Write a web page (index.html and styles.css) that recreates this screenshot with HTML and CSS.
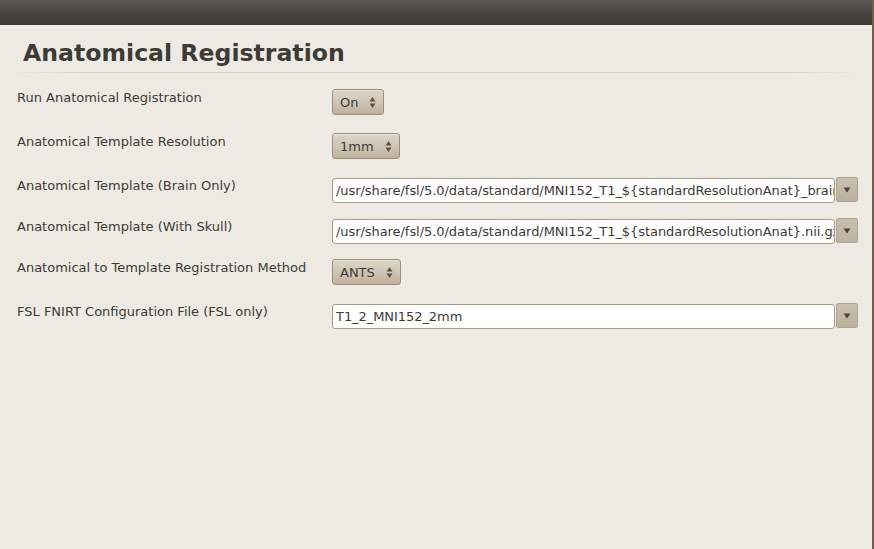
FILE: index.html
```html
<!DOCTYPE html>
<html>
<head>
<meta charset="utf-8">
<link rel="stylesheet" href="styles.css">
</head>
<body>
<div class="window">
  <div class="titlebar"></div>
  <div class="content">
    <h1 class="heading">Anatomical Registration</h1>
    <div class="rule"></div>
    <div class="form">
      <div class="row row-spin">
        <div class="label">Run Anatomical Registration</div>
        <div class="spin"><span class="spin-text">On</span><span class="arrows"><svg width="7" height="13" viewBox="0 0 7 13"><path d="M3.5 1 L6.5 5.5 L0.5 5.5 Z" fill="#5a5247"/><path d="M3.5 12 L6.5 7.5 L0.5 7.5 Z" fill="#5a5247"/></svg></span></div>
      </div>
      <div class="row row-spin">
        <div class="label">Anatomical Template Resolution</div>
        <div class="spin"><span class="spin-text">1mm</span><span class="arrows"><svg width="7" height="13" viewBox="0 0 7 13"><path d="M3.5 1 L6.5 5.5 L0.5 5.5 Z" fill="#5a5247"/><path d="M3.5 12 L6.5 7.5 L0.5 7.5 Z" fill="#5a5247"/></svg></span></div>
      </div>
      <div class="row row-input">
        <div class="label">Anatomical Template (Brain Only)</div>
        <div class="combo"><div class="entry">/usr/share/fsl/5.0/data/standard/MNI152_T1_${standardResolutionAnat}_brain.nii.gz</div><div class="drop"><svg width="8" height="6" viewBox="0 0 8 6"><path d="M0.5 0.5 L7.5 0.5 L4 5.5 Z" fill="#4a433a"/></svg></div></div>
      </div>
      <div class="row row-input">
        <div class="label">Anatomical Template (With Skull)</div>
        <div class="combo"><div class="entry">/usr/share/fsl/5.0/data/standard/MNI152_T1_${standardResolutionAnat}.nii.gz</div><div class="drop"><svg width="8" height="6" viewBox="0 0 8 6"><path d="M0.5 0.5 L7.5 0.5 L4 5.5 Z" fill="#4a433a"/></svg></div></div>
      </div>
      <div class="row row-spin">
        <div class="label">Anatomical to Template Registration Method</div>
        <div class="spin"><span class="spin-text">ANTS</span><span class="arrows"><svg width="7" height="13" viewBox="0 0 7 13"><path d="M3.5 1 L6.5 5.5 L0.5 5.5 Z" fill="#5a5247"/><path d="M3.5 12 L6.5 7.5 L0.5 7.5 Z" fill="#5a5247"/></svg></span></div>
      </div>
      <div class="row row-input">
        <div class="label">FSL FNIRT Configuration File (FSL only)</div>
        <div class="combo"><div class="entry">T1_2_MNI152_2mm</div><div class="drop"><svg width="8" height="6" viewBox="0 0 8 6"><path d="M0.5 0.5 L7.5 0.5 L4 5.5 Z" fill="#4a433a"/></svg></div></div>
      </div>
    </div>
  </div>
</div>
</body>
</html>
```
FILE: styles.css
```css
html, body {
  margin: 0;
  padding: 0;
  width: 874px;
  height: 549px;
  overflow: hidden;
  background: #edeae3;
}
.window {
  width: 872px;
  height: 549px;
  border-right: 2px solid #6f604d;
  box-sizing: content-box;
  display: flex;
  flex-direction: column;
  font-family: "DejaVu Sans", sans-serif;
  color: #3c3b37;
}
.titlebar {
  height: 25px;
  flex: none;
  background: linear-gradient(to bottom, #5a5954 0%, #46453f 50%, #3c3b37 100%);
}
.content {
  flex: 1;
  background: #edeae3;
}
.heading {
  margin: 0;
  padding: 13px 0 0 23px;
  height: 33px;
  font-family: "DejaVu Sans", sans-serif;
  font-weight: bold;
  font-size: 23.6px;
  line-height: 30px;
  color: #3c3b37;
}
.rule {
  height: 1px;
  margin: 1px 10px 0 10px;
  background: linear-gradient(to right, rgba(215,208,193,0) 0%, #d7d0c1 8%, #d7d0c1 92%, rgba(215,208,193,0) 100%);
}
.form {
  padding: 16px 0 0 17px;
  display: flex;
  flex-direction: column;
}
.row {
  display: flex;
  align-items: flex-start;
}
.row-spin { height: 44px; }
.row-input { height: 41px; }
.label {
  width: 315px;
  flex: none;
  font-size: 13px;
  line-height: 15px;
  margin-top: 1px;
  color: #3c3b37;
}
.spin {
  height: 26px;
  box-sizing: border-box;
  display: flex;
  align-items: center;
  padding: 0 7px 0 7px;
  border: 1px solid #9d8e77;
  border-radius: 3px;
  background: linear-gradient(to bottom, #ddd5c7 0%, #cfc5b4 50%, #bfb29d 100%);
  box-shadow: inset 0 1px 0 rgba(255,255,255,0.35);
  font-size: 13px;
  color: #3c3b37;
}
.spin-text {
  margin-right: 11px;
  margin-top: 1px;
}
.arrows {
  display: flex;
  align-items: center;
}
.arrows svg { display: block; }
.combo {
  display: flex;
  align-items: flex-start;
  width: 526px;
  margin-top: 1px;
}
.entry {
  width: 503px;
  height: 25px;
  box-sizing: border-box;
  background: #ffffff;
  border: 1px solid #a99c86;
  border-radius: 3px;
  padding: 0 0 0 3px;
  font-size: 13px;
  letter-spacing: -0.06px;
  line-height: 23px;
  white-space: nowrap;
  overflow: hidden;
  color: #3c3b37;
}
.drop {
  width: 22px;
  height: 25px;
  margin-left: 1px;
  margin-top: -1px;
  box-sizing: border-box;
  display: flex;
  align-items: center;
  justify-content: center;
  background: linear-gradient(to bottom, #c9bfae 0%, #bcb19e 100%);
  border: 1px solid #b0a48f;
  border-radius: 2px;
}
.drop svg { display: block; margin-top: 1px; }
```
